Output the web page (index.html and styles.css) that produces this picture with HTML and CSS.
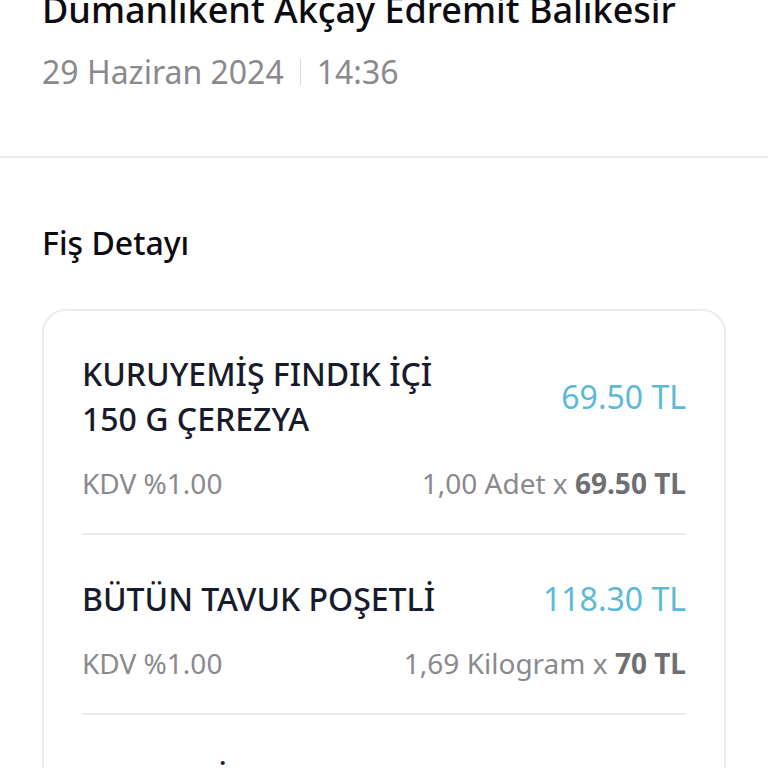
FILE: index.html
```html
<!DOCTYPE html>
<html lang="tr">
<head>
  <meta charset="UTF-8">
  <meta name="viewport" content="width=device-width, initial-scale=1.0">
  <title>Fiş Detayı</title>
  <link rel="stylesheet" href="styles.css">
</head>
<body>
  <header class="store">
    <h1 class="store-name">Dumanlıkent Akçay Edremit Balıkesir</h1>
    <div class="store-date">
      <span>29 Haziran 2024</span>
      <span class="sep"></span>
      <span>14:36</span>
    </div>
  </header>
  <div class="divider"></div>
  <section class="receipt">
    <h2 class="receipt-title">Fiş Detayı</h2>
    <ul class="receipt-card">
      <li class="item">
        <div class="item-top">
          <div class="item-name">KURUYEMİŞ FINDIK İÇİ<br>150 G ÇEREZYA</div>
          <div class="item-price">69.50 TL</div>
        </div>
        <div class="item-meta">
          <span>KDV %1.00</span>
          <span>1,00 Adet x <b>69.50 TL</b></span>
        </div>
      </li>
      <li class="item">
        <div class="item-top">
          <div class="item-name">BÜTÜN TAVUK POŞETLİ</div>
          <div class="item-price">118.30 TL</div>
        </div>
        <div class="item-meta">
          <span>KDV %1.00</span>
          <span>1,69 Kilogram x <b>70 TL</b></span>
        </div>
      </li>
      <li class="item">
        <div class="item-top">
          <div class="item-name">MARGARİN KASE<br>250 G</div>
          <div class="item-price">42.90 TL</div>
        </div>
        <div class="item-meta">
          <span>KDV %1.00</span>
          <span>1,00 Adet x <b>42.90 TL</b></span>
        </div>
      </li>
    </ul>
  </section>
</body>
</html>
```

FILE: styles.css
```css
body {
  margin: 0;
  padding: 0;
  font-family: 'Noto Sans', Lato, sans-serif;
  background: #fff;
  color: #14161f;
  overflow: hidden;
}
.store {
  display: flex;
  flex-direction: column;
  padding: 0 42px;
  height: 156px;
}
.store-name {
  margin: -10px 0 0;
  font-size: 36px;
  line-height: 40px;
  font-weight: 500;
  white-space: nowrap;
  color: #0c0c10;
}
.store-date {
  display: flex;
  align-items: center;
  gap: 16px;
  margin-top: 22px;
  font-size: 32px;
  line-height: 40px;
  color: #8a8a8e;
}
.sep {
  width: 1px;
  height: 26px;
  background: #dcdcdf;
}
.divider {
  height: 2px;
  background: #ebebef;
}
.receipt {
  padding: 0 42px;
}
.receipt-title {
  margin: 65px 0 46px;
  font-size: 32px;
  line-height: 40px;
  font-weight: 500;
  color: #0c0c10;
}
.receipt-card {
  list-style: none;
  margin: 0;
  padding: 0 38px;
  border: 2px solid #ececef;
  border-radius: 24px;
}
.item {
  padding: 40px 0 33px;
  border-bottom: 2px solid #ebebef;
}
.item + .item {
  padding-top: 41px;
}
.item-top {
  display: flex;
  align-items: center;
  justify-content: space-between;
}
.item-name {
  font-size: 32px;
  line-height: 45px;
  font-weight: 500;
  color: #171b2b;
}
.item-price {
  font-size: 32px;
  line-height: 45px;
  color: #5bbad8;
}
.item-meta {
  display: flex;
  justify-content: space-between;
  margin-top: 25px;
  font-size: 28px;
  line-height: 34px;
  color: #8a8a8e;
}
.item-meta b {
  font-weight: 700;
  color: #6f6f73;
}
```
